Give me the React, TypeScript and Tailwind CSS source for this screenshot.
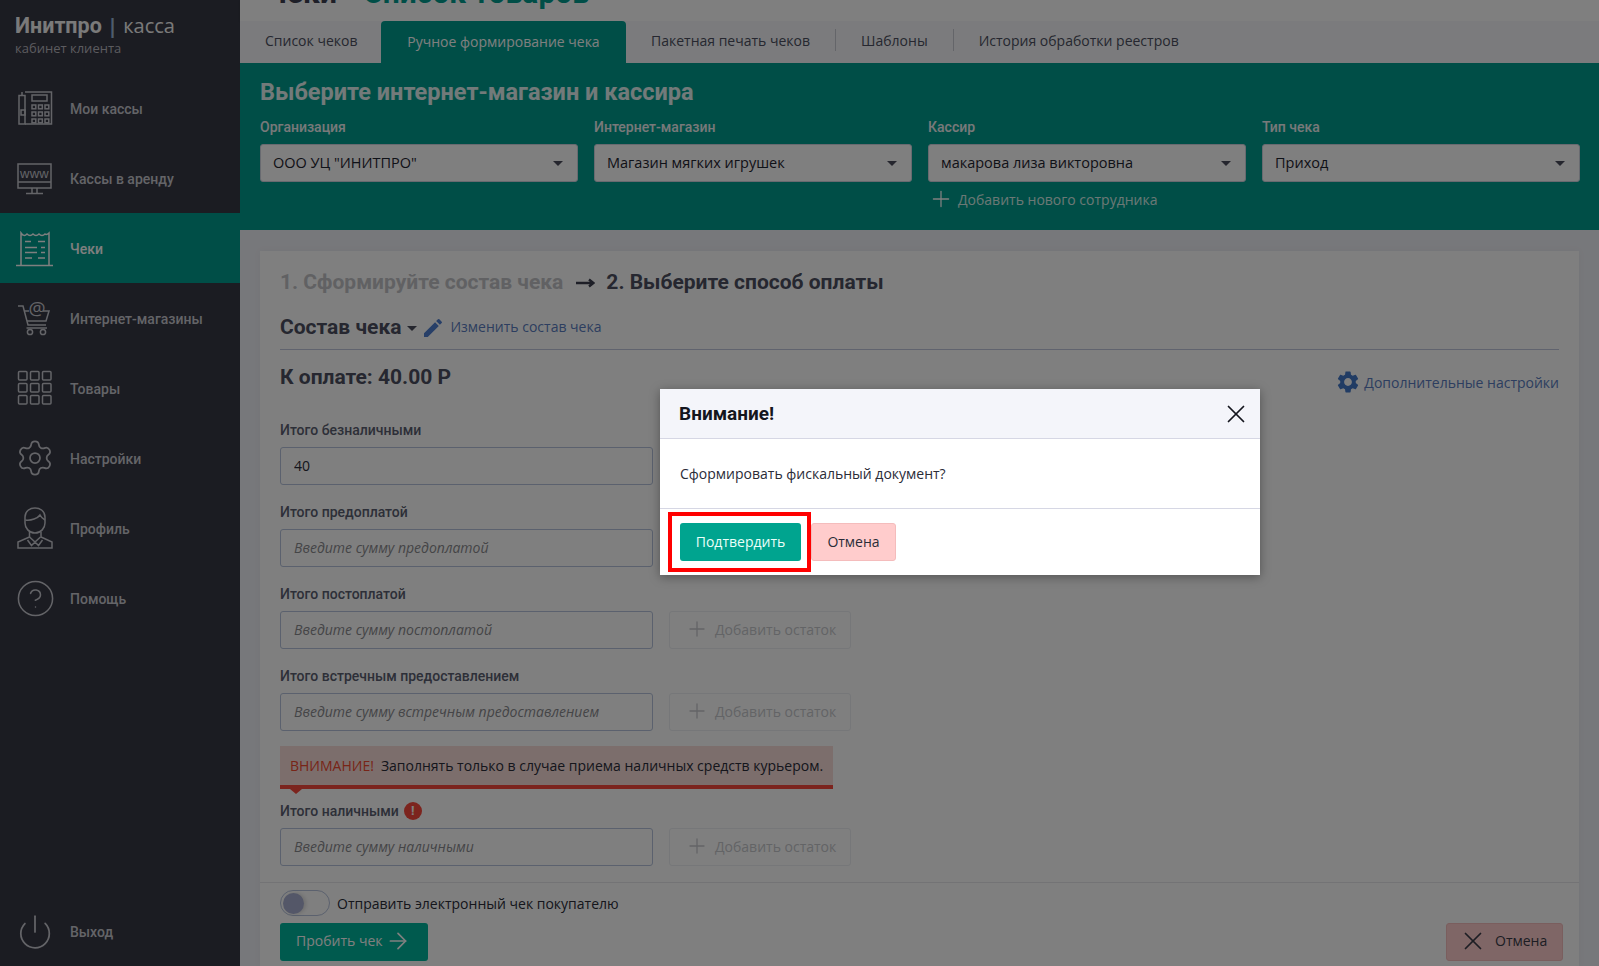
import { MdEdit, MdSettings } from "react-icons/md";
import { Settings, Plus, X, ArrowRight, CircleHelp, Power } from "lucide-react";

function PhoneIcon() {
  return (
    <svg width="36" height="36" viewBox="0 0 36 36" fill="none" stroke="currentColor" strokeWidth="1.5">
      <path d="M2 5.5 H8 V34 H2 Z" />
      <path d="M8 2 H34.5 V34 H8" />
      <path d="M5 2 V5.5" />
      <rect x="15" y="5" width="15" height="6" />
      <path d="M4 20 H8 V25 H4 Z" />
      {[15, 22, 29].map((y) =>
        [15, 21.5, 28].map((x) => <rect key={`${x}-${y}`} x={x} y={y} width="3.8" height="3.8" />)
      )}
    </svg>
  );
}

function WwwIcon() {
  return (
    <svg width="36" height="36" viewBox="0 0 36 36" fill="none" stroke="currentColor" strokeWidth="1.5">
      <rect x="1" y="4" width="33" height="24" />
      <path d="M1 22 H34" />
      <path d="M15 28 V33 M20 28 V33 M9 33.5 H26" />
      <text x="17.5" y="17.5" textAnchor="middle" fontSize="13" stroke="none" fill="currentColor" fontFamily="'Liberation Sans', sans-serif" letterSpacing="0.3">
        www
      </text>
    </svg>
  );
}

function ReceiptIcon() {
  return (
    <svg width="38" height="36" viewBox="0 0 38 36" fill="none" stroke="currentColor" strokeWidth="1.5" className="mt-[2px]">
      <path d="M5 34 V2 C7 5 9 5 11 3 C13 5 15 5 17 3 C19 5 21 5 23 3 C25 5 27 5 29 3 C30 4 31 4 33 2 V34" />
      <path d="M0 34.5 H37" />
      <path d="M9 10.5 H15 M22 10.5 H29 M9 16.5 H21 M25 16.5 H29 M9 21.5 H21 M25 21.5 H29 M9 27 H16 M22 27 H29" />
    </svg>
  );
}

function CartIcon() {
  return (
    <svg width="36" height="36" viewBox="0 0 36 36" fill="none" stroke="currentColor" strokeWidth="1.5">
      <path d="M1 6 H6 L11 25 H29" />
      <path d="M7.5 11 H12 M26 11 H32 L29 21 H10" />
      <path d="M9.5 28 H30" />
      <circle cx="13" cy="32" r="2.6" />
      <circle cx="26" cy="32" r="2.6" />
      <text x="20" y="15" textAnchor="middle" fontSize="19" stroke="none" fill="currentColor" fontFamily="'Open Sans', sans-serif">
        @
      </text>
    </svg>
  );
}

function GoodsIcon() {
  return (
    <svg width="36" height="36" viewBox="0 0 36 36" fill="none" stroke="currentColor" strokeWidth="1.5">
      {[1.5, 13.5, 25.5].map((y) =>
        [1.5, 13.5, 25.5].map((x) => <rect key={`${x}-${y}`} x={x} y={y} width="8.5" height="8.5" rx="1" />)
      )}
    </svg>
  );
}

function ProfileIcon() {
  return (
    <svg width="38" height="42" viewBox="0 0 38 42" fill="none" stroke="currentColor" strokeWidth="1.5">
      <path d="M9 16 V10 C9 4 14 1 19 1 C24 1 29 4 29 10 V16 C29 21 25 26 19 26 C13 26 9 21 9 16 Z" />
      <path d="M9.5 13 C15 14 22 11 24 8 C25 10 27 12 29 13" />
      <path d="M13.5 25 V30 L2 35 V41 H36 V35 L25 30 V25" />
      <path d="M13.5 30 L19 35 L24.5 30 M19 35 L15.5 38.5 L11.5 33 M19 35 L22.5 38.5 L26.5 33" />
    </svg>
  );
}

const nav = [
  { label: "Мои кассы", icon: <PhoneIcon /> },
  { label: "Кассы в аренду", icon: <WwwIcon /> },
  { label: "Чеки", icon: <ReceiptIcon />, active: true },
  { label: "Интернет-магазины", icon: <CartIcon /> },
  { label: "Товары", icon: <GoodsIcon /> },
  { label: "Настройки", icon: <Settings size={40} strokeWidth={1.05} /> },
  { label: "Профиль", icon: <ProfileIcon /> },
  { label: "Помощь", icon: <CircleHelp size={41} strokeWidth={0.9} /> },
];

function Sidebar() {
  return (
    <aside className="w-[240px] shrink-0 h-full flex flex-col bg-[#363844] text-[#c8c9d0] font-['Roboto',sans-serif]">
      <div className="h-[73px] pl-[15px] pt-[11px] shrink-0">
        <div className="text-[20px] leading-[29px] text-[#f4f4f4] font-['Open_Sans',sans-serif]">
          <span className="font-bold text-[21.5px] font-['Roboto',sans-serif]">Инитпро</span>{" "}
          <span className="font-bold text-[#9db8d8]">|</span> касса
        </div>
        <div className="text-[13px] leading-[17px] text-[#b6b7bf] font-['Open_Sans',sans-serif]">кабинет клиента</div>
      </div>
      {nav.map((item) => (
        <div
          key={item.label}
          className={`h-[70px] shrink-0 flex items-center ${item.active ? "bg-[#009d8f] text-white" : ""}`}
        >
          <div className="w-[70px] flex justify-center">{item.icon}</div>
          <span className="text-[14px] font-medium pt-[2px]">{item.label}</span>
        </div>
      ))}
      <div className="flex-1" />
      <div className="h-[69px] shrink-0 flex items-center">
        <div className="w-[70px] flex justify-center">
          <Power size={38} strokeWidth={1.1} />
        </div>
        <span className="text-[14px] font-medium pt-[2px]">Выход</span>
      </div>
    </aside>
  );
}

function Caret({ className = "" }: { className?: string }) {
  return <span className={`w-0 h-0 border-x-[5px] border-x-transparent border-t-[5px] border-t-[#4a4c5c] ${className}`} />;
}

function SelectBox({ label, value, children }: { label: string; value: string; children?: React.ReactNode }) {
  return (
    <div className="flex flex-col">
      <div className="h-[19px] text-[14px] leading-[19px] font-medium text-[#f0f2f4] font-['Roboto',sans-serif] mb-[7px]">{label}</div>
      <div className="h-[38px] rounded-[3px] border border-[#d0d4e0] bg-white flex items-center justify-between pl-[12px] pr-[14px] text-[14.5px] text-[#1f2430]">
        <span>{value}</span>
        <Caret />
      </div>
      {children}
    </div>
  );
}

function Field({ placeholder, value, addon }: { placeholder?: string; value?: string; addon?: boolean }) {
  return (
    <div className="flex gap-[16px] h-[38px]">
      <input
        readOnly
        value={value ?? ""}
        placeholder={placeholder}
        className="w-[373px] h-[38px] rounded-[3px] border border-[#b6c2dc] bg-white pl-[13px] pr-[12px] pb-[2px] text-[14px] text-[#2a2c38] placeholder:italic placeholder:text-[#8a8a8e] outline-none"
      />
      {addon && (
        <div className="w-[182px] h-[38px] rounded-[3px] border border-[#eceef2] flex items-center pl-[15px] gap-[6px] pb-[2px] text-[14px] text-[#c6c8cc]">
          <Plus size={24} strokeWidth={1.3} />
          <span>Добавить остаток</span>
        </div>
      )}
    </div>
  );
}

function AmountRow({ label, placeholder, value, addon }: { label: string; placeholder?: string; value?: string; addon?: boolean }) {
  return (
    <div className="flex flex-col">
      <div className="h-[20px] text-[14px] leading-[20px] font-medium text-[#5a5e70] font-['Roboto',sans-serif] mb-[7px]">{label}</div>
      <Field placeholder={placeholder} value={value} addon={addon} />
    </div>
  );
}

function PaymentCard() {
  return (
    <section className="mx-[20px] h-full bg-white shadow-[0_0_8px_rgba(0,0,0,0.04)] flex flex-col">
      <div className="px-[20px] pt-[17px]">
        <div className="h-[30px] flex items-center text-[21px] font-bold font-['Roboto',sans-serif]">
          <span className="text-[#c2c3c7]">1. Сформируйте состав чека</span>
          <svg width="19" height="10" viewBox="0 0 19 10" className="ml-[13px] mr-[11px] text-[#3c3e4e]">
            <path d="M0 5 H16 M13 1.5 L17.5 5 L13 8.5" fill="none" stroke="currentColor" strokeWidth="2.4" />
          </svg>
          <span className="text-[#4c4f60]">2. Выберите способ оплаты</span>
        </div>
        <div className="mt-[14px] h-[32px] flex items-center">
          <span className="text-[21px] font-bold font-['Roboto',sans-serif] text-[#4c4f60]">Состав чека</span>
          <Caret className="ml-[6px]" />
          <MdEdit size={24} className="ml-[4px] text-[#4f7fd0]" />
          <span className="ml-[5px] -mt-[4px] text-[14px] text-[#5a7cc0]">Изменить состав чека</span>
        </div>
        <div className="mt-[5px] border-t border-[#c0c6dc]" />
        <div className="mt-[12px] flex justify-between">
          <span className="text-[21px] leading-[30px] font-bold font-['Roboto',sans-serif] text-[#4c4f60]">К оплате: 40.00 Р</span>
          <span className="flex items-center gap-[3px] text-[14px] text-[#5a7cc0] mt-[5px] h-[30px]">
            <MdSettings size={26} className="text-[#4378c8]" />
            Дополнительные настройки
          </span>
        </div>
        <div className="mt-[23px] flex flex-col gap-[17px]">
          <AmountRow label="Итого безналичными" value="40" />
          <AmountRow label="Итого предоплатой" placeholder="Введите сумму предоплатой" />
          <AmountRow label="Итого постоплатой" placeholder="Введите сумму постоплатой" addon />
          <AmountRow label="Итого встречным предоставлением" placeholder="Введите сумму встречным предоставлением" addon />
        </div>
        <div className="relative mt-[15px] w-[553px] h-[43px] bg-[#f8dcd8] border-b-[4px] border-[#f8483c] flex items-center pl-[10px] text-[14px] text-[#2a2c38]">
          <span className="text-[#f04a30] mr-[7px]">ВНИМАНИЕ!</span>
          <span>Заполнять только в случае приема наличных средств курьером.</span>
          <span className="absolute left-[10px] -bottom-[9px] w-0 h-0 border-x-[6px] border-x-transparent border-t-[5px] border-t-[#f8483c]" />
        </div>
        <div className="mt-[12px] h-[20px] flex items-center gap-[5px] text-[14px] font-medium text-[#5a5e70] font-['Roboto',sans-serif]">
          Итого наличными
          <span className="w-[18px] h-[18px] rounded-full bg-[#f8483c] text-white text-[13px] font-bold flex items-center justify-center">!</span>
        </div>
        <div className="mt-[7px]">
          <Field placeholder="Введите сумму наличными" addon />
        </div>
      </div>
      <div className="mt-[16px] border-t border-[#e6e7ea] px-[20px] pt-[7px] flex-1">
        <div className="flex items-center gap-[7px] h-[26px] text-[14px] text-[#2a2c38]">
          <span className="w-[50px] h-[26px] rounded-full border border-[#b6c2dc] bg-white flex items-center pl-[2px]">
            <span className="w-[21px] h-[21px] rounded-full bg-[#a8aed0] shadow-[2px_0_4px_rgba(0,0,0,0.15)]" />
          </span>
          Отправить электронный чек покупателю
        </div>
        <div className="mt-[7px] flex justify-between">
          <div className="w-[148px] h-[38px] pb-[3px] rounded-[3px] bg-[#00b59c] text-white flex items-center pl-[16px] gap-[3px] text-[14px]">
            Пробить чек
            <ArrowRight size={26} strokeWidth={1.6} />
          </div>
          <div className="w-[117px] h-[38px] pb-[3px] rounded-[3px] bg-[#ffcccc] border border-[#f4bcbc] text-[#3a3c48] flex items-center pl-[11px] gap-[7px] text-[14px] mr-[-4px]">
            <X size={30} strokeWidth={1.4} />
            Отмена
          </div>
        </div>
      </div>
    </section>
  );
}

function ConfirmDialog() {
  return (
    <div className="absolute z-30 left-[660px] top-[389px] w-[600px] h-[186px] bg-white shadow-[0_2px_10px_rgba(0,0,0,0.35)] flex flex-col">
      <div className="h-[50px] bg-[#f4f5fa] border-b border-[#d6d7e4] flex items-center justify-between pl-[19px] pr-[9px]">
        <span className="text-[19px] pt-[2px] font-bold font-['Roboto',sans-serif] text-[#14161e]">Внимание!</span>
        <X size={30} strokeWidth={1.4} className="text-[#14161e]" />
      </div>
      <div className="h-[70px] border-b border-[#d6d7e4] flex items-center pl-[20px] text-[14px] text-[#2a2c38]">
        Сформировать фискальный документ?
      </div>
      <div className="flex-1 relative flex items-start gap-[10px] pl-[20px] pt-[14px] text-[14px]">
        <div className="h-[38px] w-[121px] pb-[2px] rounded-[3px] bg-[#00a48f] text-[#eafff9] flex items-center justify-center">Подтвердить</div>
        <div className="h-[38px] w-[85px] pb-[2px] rounded-[3px] bg-[#ffcccc] border border-[#f4bcbc] text-[#2a2c38] flex items-center justify-center">Отмена</div>
        <div className="absolute left-[8px] top-[3px] w-[143px] h-[60px] border-[4px] border-[#ff0000]" />
      </div>
    </div>
  );
}

const tabs = ["Пакетная печать чеков", "Шаблоны", "История обработки реестров"];

export default function App() {
  return (
    <div className="relative w-[1599px] h-[966px] overflow-hidden flex bg-[#eff0f6] font-['Open_Sans',sans-serif]">
      <Sidebar />
      <main className="flex-1 h-full flex flex-col min-w-0">
        {/* Header, page is scrolled so only the lower edge shows */}
        <div className="h-[21px] shrink-0 bg-white overflow-hidden flex items-end pl-[26px] pb-[13px] shadow-[0_1px_2px_rgba(0,0,0,0.1)] font-['Roboto',sans-serif] text-[30px] font-bold leading-[30px]">
          <span className="text-[#3c3e50]">Чеки</span>
          <span className="text-[#b8b8b8] mx-[11px] text-[14px]">›</span>
          <span className="text-[#009d8f]">Список товаров</span>
        </div>
        {/* Tabs */}
        <div className="h-[42px] shrink-0 bg-[#f6f7fa] flex items-stretch pl-[25px] text-[14px] text-[#4c4f60]">
          <span className="flex items-center w-[116px] pb-[4px]">Список чеков</span>
          <span className="flex items-center justify-center w-[245px] pb-[2px] bg-[#009d8f] text-white rounded-t-[4px]">Ручное формирование чека</span>
          {tabs.map((t, i) => (
            <span key={t} className="flex items-center pb-[4px]">
              <span className={`px-[25px] ${i > 0 ? "border-l border-[#c9cbd2] h-[22px] flex items-center" : ""}`}>{t}</span>
            </span>
          ))}
        </div>
        {/* Shop + cashier */}
        <div className="h-[167px] shrink-0 bg-[#009d8f] pl-[20px] pr-[19px] pt-[14px]">
          <h2 className="text-[23.5px] leading-[30px] font-bold text-white/90 font-['Roboto',sans-serif]">Выберите интернет-магазин и кассира</h2>
          <div className="mt-[11px] grid grid-cols-4 gap-x-[16px]">
            <SelectBox label="Организация" value='ООО УЦ "ИНИТПРО"' />
            <SelectBox label="Интернет-магазин" value="Магазин мягких игрушек" />
            <SelectBox label="Кассир" value="макарова лиза викторовна">
              <div className="mt-[4px] flex items-center gap-[4px] text-[14px] text-[#d8f0ea]">
                <Plus size={26} strokeWidth={1.2} className="text-white" />
                Добавить нового сотрудника
              </div>
            </SelectBox>
            <SelectBox label="Тип чека" value="Приход" />
          </div>
        </div>
        <div className="flex-1 min-h-0 pt-[21px]">
          <PaymentCard />
        </div>
      </main>
      {/* Modal backdrop */}
      <div className="absolute inset-0 z-20 bg-black/50" />
      <ConfirmDialog />
    </div>
  );
}
